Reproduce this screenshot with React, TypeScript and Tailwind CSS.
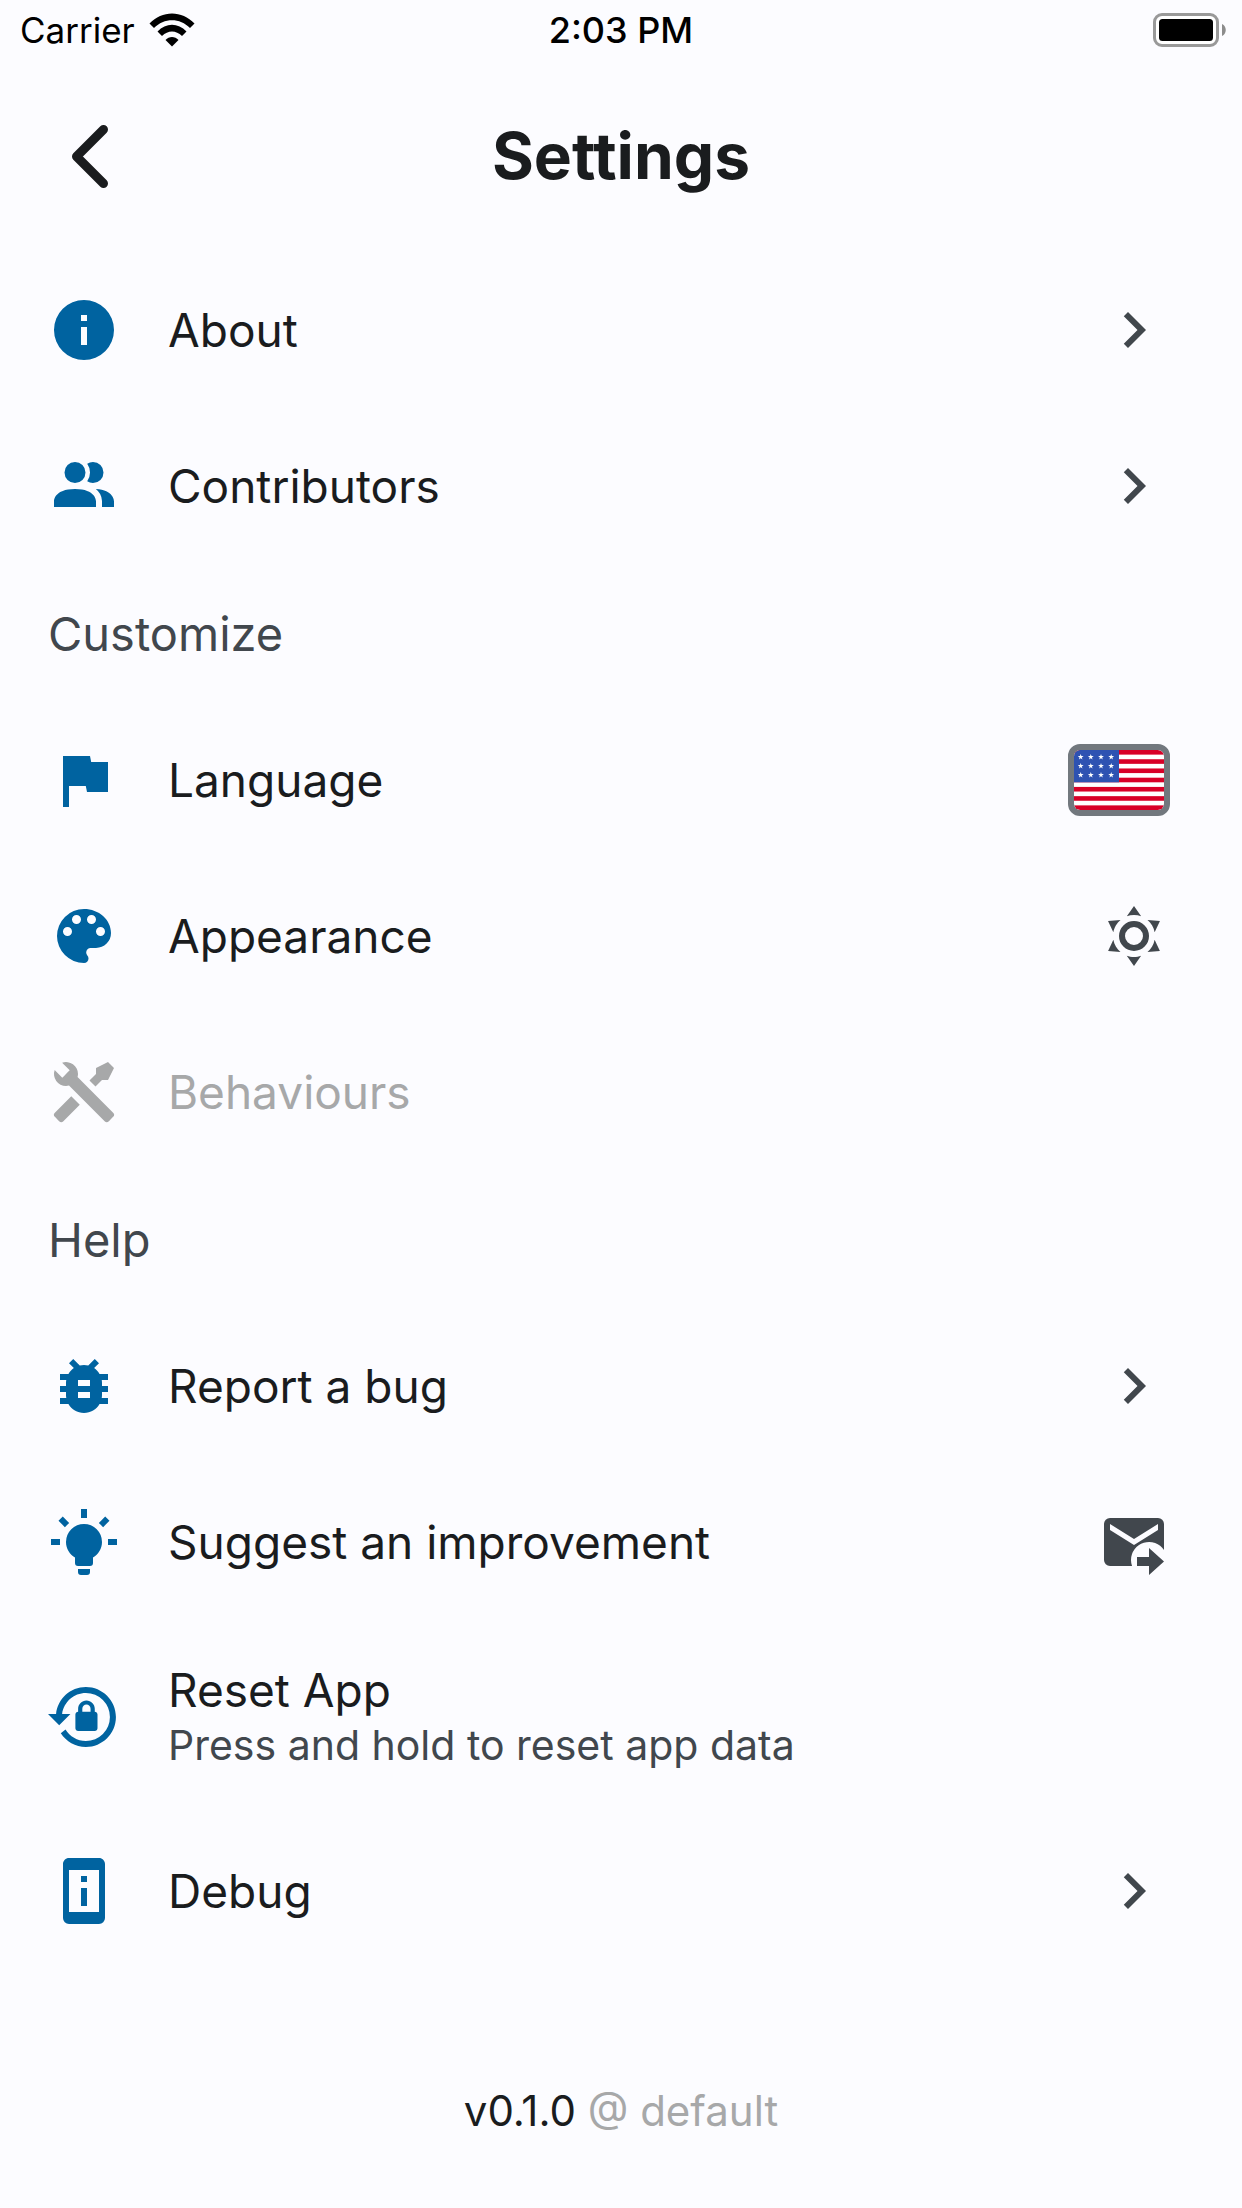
import type { ReactNode } from "react";

const icons = {
  information:
    "M13,9H11V7H13M13,17H11V11H13M12,2A10,10 0 0,0 2,12A10,10 0 0,0 12,22A10,10 0 0,0 22,12A10,10 0 0,0 12,2Z",
  people:
    "M16 17V19H2V17S2 13 9 13 16 17 16 17M12.5 7.5A3.5 3.5 0 1 0 9 11A3.5 3.5 0 0 0 12.5 7.5M15.94 13A5.32 5.32 0 0 1 18 17V19H22V17S22 13.37 15.94 13M15 4A3.39 3.39 0 0 0 13.07 4.59A5 5 0 0 1 13.07 10.41A3.39 3.39 0 0 0 15 11A3.5 3.5 0 0 0 15 4Z",
  flag: "M14.4,6L14,4H5V21H7V14H12.6L13,16H20V6H14.4Z",
  palette:
    "M17.5,12A1.5,1.5 0 0,1 16,10.5A1.5,1.5 0 0,1 17.5,9A1.5,1.5 0 0,1 19,10.5A1.5,1.5 0 0,1 17.5,12M14.5,8A1.5,1.5 0 0,1 13,6.5A1.5,1.5 0 0,1 14.5,5A1.5,1.5 0 0,1 16,6.5A1.5,1.5 0 0,1 14.5,8M9.5,8A1.5,1.5 0 0,1 8,6.5A1.5,1.5 0 0,1 9.5,5A1.5,1.5 0 0,1 11,6.5A1.5,1.5 0 0,1 9.5,8M6.5,12A1.5,1.5 0 0,1 5,10.5A1.5,1.5 0 0,1 6.5,9A1.5,1.5 0 0,1 8,10.5A1.5,1.5 0 0,1 6.5,12M12,3A9,9 0 0,0 3,12A9,9 0 0,0 12,21A1.5,1.5 0 0,0 13.5,19.5C13.5,19.11 13.35,18.76 13.11,18.5C12.88,18.23 12.73,17.88 12.73,17.5A1.5,1.5 0 0,1 14.23,16H16A5,5 0 0,0 21,11C21,6.58 16.97,3 12,3Z",
  tools:
    "M21.71 20.29L20.29 21.71A1 1 0 0 1 18.88 21.71L7 9.85A3.81 3.81 0 0 1 6 10A4 4 0 0 1 2.22 4.7L4.76 7.24L5.29 6.71L6.71 5.29L7.24 4.76L4.7 2.22A4 4 0 0 1 10 6A3.81 3.81 0 0 1 9.85 7L21.71 18.88A1 1 0 0 1 21.71 20.29M2.29 18.88A1 1 0 0 0 2.29 20.29L3.71 21.71A1 1 0 0 0 5.12 21.71L10.59 16.25L7.76 13.42M20 2L16 4V6L13.83 8.17L15.83 10.17L18 8H20L22 4Z",
  bug: "M14,12H10V10H14M14,16H10V14H14M20,8H17.19C16.74,7.22 16.12,6.55 15.37,6.04L17,4.41L15.59,3L13.42,5.17C12.96,5.06 12.5,5 12,5C11.5,5 11.04,5.06 10.59,5.17L8.41,3L7,4.41L8.62,6.04C7.88,6.55 7.26,7.22 6.81,8H4V10H6.09C6.04,10.33 6,10.66 6,11V12H4V14H6V15C6,15.34 6.04,15.67 6.09,16H4V18H6.81C7.85,19.79 9.78,21 12,21C14.22,21 16.15,19.79 17.19,18H20V16H17.91C17.96,15.67 18,15.34 18,15V14H20V12H18V11C18,10.66 17.96,10.33 17.91,10H20V8Z",
  lightbulb:
    "M12,6A6,6 0 0,1 18,12C18,14.22 16.79,16.16 15,17.2V19A1,1 0 0,1 14,20H10A1,1 0 0,1 9,19V17.2C7.21,16.16 6,14.22 6,12A6,6 0 0,1 12,6M14,21V22A1,1 0 0,1 13,23H11A1,1 0 0,1 10,22V21H14M20,11H23V13H20V11M1,11H4V13H1V11M13,1V4H11V1H13M4.92,3.5L7.05,5.64L5.63,7.05L3.5,4.93L4.92,3.5M16.95,5.63L19.07,3.5L20.5,4.93L18.37,7.05L16.95,5.63Z",
  lockReset:
    "M12.63,2C18.16,2 22.64,6.5 22.64,12C22.64,17.5 18.16,22 12.63,22C9.12,22 6.05,20.18 4.26,17.43L5.84,16.18C7.25,18.47 9.76,20 12.64,20A8,8 0 0,0 20.64,12A8,8 0 0,0 12.64,4C8.56,4 5.2,7.06 4.71,11H7.47L3.73,14.73L0,11H2.69C3.19,5.95 7.45,2 12.63,2M15.59,10.24C16.09,10.25 16.5,10.65 16.5,11.16V15.77C16.5,16.27 16.09,16.69 15.58,16.69H10.05C9.54,16.69 9.13,16.27 9.13,15.77V11.16C9.13,10.65 9.54,10.25 10.04,10.24V9.23C10.04,7.7 11.29,6.46 12.81,6.46C14.34,6.46 15.59,7.7 15.59,9.23V10.24M12.81,7.86C12.06,7.86 11.44,8.47 11.44,9.23V10.24H14.19V9.23C14.19,8.47 13.57,7.86 12.81,7.86Z",
  phoneInfo:
    "M17,19H7V5H17M17,1H7C5.89,1 5,1.89 5,3V21A2,2 0 0,0 7,23H17A2,2 0 0,0 19,21V3C19,1.89 18.1,1 17,1M11,7H13V9H11V7M11,11H13V17H11V11Z",
  sunny:
    "M12,7A5,5 0 0,1 17,12A5,5 0 0,1 12,17A5,5 0 0,1 7,12A5,5 0 0,1 12,7M12,9A3,3 0 0,0 9,12A3,3 0 0,0 12,15A3,3 0 0,0 15,12A3,3 0 0,0 12,9M12,2L14.39,5.42C13.65,5.15 12.84,5 12,5C11.16,5 10.35,5.15 9.61,5.42L12,2M3.34,7L7.5,6.65C6.9,7.16 6.36,7.78 5.94,8.5C5.5,9.24 5.25,10 5.11,10.79L3.34,7M3.36,17L5.12,13.23C5.26,14 5.53,14.78 5.95,15.5C6.37,16.24 6.91,16.86 7.5,17.37L3.36,17M20.65,7L18.88,10.79C18.74,10 18.47,9.23 18.05,8.5C17.63,7.78 17.1,7.15 16.5,6.64L20.65,7M20.64,17L16.5,17.36C17.09,16.85 17.62,16.22 18.04,15.5C18.46,14.77 18.73,14 18.87,13.21L20.64,17M12,22L9.59,18.56C10.33,18.83 11.14,19 12,19C12.82,19 13.63,18.83 14.37,18.56L12,22Z",
  chevronRight: "M8.59,16.58L13.17,12L8.59,7.41L10,6L16,12L10,18L8.59,16.58Z",
  emailSend:
    "M13 17H17V14L22 18.5L17 23V20H13V17M20 4H4A2 2 0 0 0 2 6V18A2 2 0 0 0 4 20H11.35A5.8 5.8 0 0 1 11 18A6 6 0 0 1 22 14.69V6A2 2 0 0 0 20 4M20 8L12 13L4 8V6L12 11L20 6Z",
};

function Icon({ name }: { name: keyof typeof icons }) {
  return (
    <svg viewBox="0 0 24 24" className="size-[72px] shrink-0" fill="currentColor" fillRule="evenodd" aria-hidden="true">
      <path d={icons[name]} />
    </svg>
  );
}

function UsFlag() {
  const stripes = [0, 2, 4, 6, 8, 10, 12];
  return (
    <span className="shrink-0 overflow-hidden rounded-xl border-6 border-[#72787e]">
      <svg viewBox="0 0 90 60" className="block h-[60px] w-[90px]" role="img" aria-label="United States">
        <clipPath id="flag-corners">
          <rect width="90" height="60" rx="6" />
        </clipPath>
        <rect width="90" height="60" fill="#72787e" />
        <g clipPath="url(#flag-corners)">
          <rect width="90" height="60" fill="#ffffff" />
          {stripes.map((i) => (
            <rect key={i} y={(i * 60) / 13} width="90" height={60 / 13} fill="#d80027" />
          ))}
          <rect width="45" height="32.3" fill="#2e52b2" />
          {[7, 16, 25].map((y) =>
            [6.7, 16.8, 27, 37.2].map((x) => (
              <path
                key={`${x}-${y}`}
                transform={`translate(${x} ${y})`}
                fill="#ffffff"
                d="M0,-3L0.7,-0.9H2.9L1.1,0.4L1.8,2.5L0,1.2L-1.8,2.5L-1.1,0.4L-2.9,-0.9H-0.7Z"
              />
            )),
          )}
        </g>
      </svg>
    </span>
  );
}

function StatusBar() {
  return (
    <div className="grid h-[60px] grid-cols-[1fr_auto_1fr] items-center px-4 leading-[44px] text-black">
      <div className="flex items-center gap-[14px] pl-1 text-[35px]">
        <span>Carrier</span>
        <svg viewBox="0 0 46 34" className="h-[34px] w-[46px]" aria-hidden="true">
          <path d="M0.5,10.5C13,-3 33,-3 45.5,10.5L41,15C31,4.5 15,4.5 5,15Z" />
          <path d="M8.5,18.5C17,9.5 29,9.5 37.5,18.5L33,23C27,17 19,17 13,23Z" />
          <path d="M16.5,27C20,23 26,23 29.5,27L23,33.5Z" />
        </svg>
      </div>
      <time className="text-[36px] font-medium">2:03 PM</time>
      <svg viewBox="0 0 73 34" className="h-[34px] w-[73px] justify-self-end" role="img" aria-label="Battery full">
        <rect x="1.5" y="1.5" width="63" height="31" rx="7.5" fill="#ffffff" stroke="#999999" strokeWidth="3" />
        <rect x="6" y="6" width="54" height="22" rx="3.5" />
        <path d="M69,11C74,13 74,21 69,23Z" fill="#8c8c8c" />
      </svg>
    </div>
  );
}

interface RowProps {
  icon: keyof typeof icons;
  label: string;
  detail?: string;
  disabled?: boolean;
  trailing?: ReactNode;
}

function Row({ icon, label, detail, disabled, trailing }: RowProps) {
  return (
    <li>
      <button
        type="button"
        disabled={disabled}
        className="flex w-full items-center gap-12 py-[42px] pr-[72px] pl-12 text-left text-[#1a1c1e] disabled:text-[#a7a8a9]"
      >
        <span className={disabled ? "shrink-0" : "shrink-0 text-[#0063a0]"}>
          <Icon name={icon} />
        </span>
        <span className="flex grow flex-col">
          <span className="text-[46px] leading-[57px]">{label}</span>
          {detail && <span className="text-[41px] leading-[52px] text-[#41474d]">{detail}</span>}
        </span>
        <span className="flex shrink-0 items-center text-[#41474d]">{trailing}</span>
      </button>
    </li>
  );
}

function Section({ title, children }: { title?: string; children: ReactNode }) {
  return (
    <section>
      {title && (
        <h2 className="flex h-[138px] items-center px-12 text-[47px] leading-[57px] text-[#41474d]">{title}</h2>
      )}
      <ul>{children}</ul>
    </section>
  );
}

export default function App() {
  const chevron = <Icon name="chevronRight" />;
  return (
    <div className="flex min-h-screen flex-col bg-[#fcfcff] font-['Inter',sans-serif]">
      <StatusBar />
      <header className="grid h-48 grid-cols-[1fr_auto_1fr] items-center px-12">
        <button type="button" aria-label="Back" className="flex size-[84px] items-center justify-center">
          <svg viewBox="0 0 84 84" className="size-[84px]" fill="none" stroke="#1a1c1e" aria-hidden="true">
            <path d="M55.5,15.5L28.5,42.5L55.5,69.5" strokeWidth="9" strokeLinecap="round" strokeLinejoin="round" />
          </svg>
        </button>
        <h1 className="text-[64px] leading-[80px] font-bold text-[#1a1c1e]">Settings</h1>
      </header>
      <main>
        <Section>
          <Row icon="information" label="About" trailing={chevron} />
          <Row icon="people" label="Contributors" trailing={chevron} />
        </Section>
        <Section title="Customize">
          <Row icon="flag" label="Language" trailing={<UsFlag />} />
          <Row icon="palette" label="Appearance" trailing={<Icon name="sunny" />} />
          <Row icon="tools" label="Behaviours" disabled />
        </Section>
        <Section title="Help">
          <Row icon="bug" label="Report a bug" trailing={chevron} />
          <Row icon="lightbulb" label="Suggest an improvement" trailing={<Icon name="emailSend" />} />
          <Row icon="lockReset" label="Reset App" detail="Press and hold to reset app data" />
          <Row icon="phoneInfo" label="Debug" trailing={chevron} />
        </Section>
      </main>
      <footer className="mt-auto pb-[72px] text-center text-[42px] leading-[50px] text-[#1a1c1e]">
        v0.1.0 <span className="text-[#a7a8a9]">@ default</span>
      </footer>
    </div>
  );
}
